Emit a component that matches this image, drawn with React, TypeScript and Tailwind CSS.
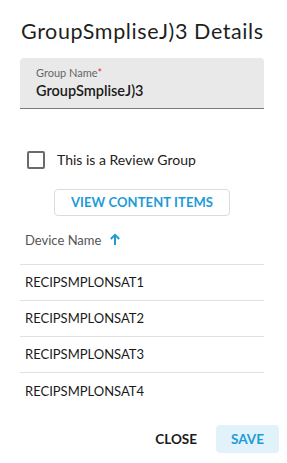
import React from "react";

const rows = ["RECIPSMPLONSAT1", "RECIPSMPLONSAT2", "RECIPSMPLONSAT3", "RECIPSMPLONSAT4"];

export default function App() {
  return (
    <div
      className="w-[287px] h-[463px] bg-white overflow-hidden flex flex-col pl-5 pr-[23px]"
      style={{ fontFamily: "Lato, 'Open Sans', sans-serif" }}
    >
      <h1 className="pt-[17px] text-[21.5px] leading-[28px] tracking-[0.6px] text-[#1f1f1f] pl-px whitespace-nowrap">
        GroupSmpliseJ)3 Details
      </h1>

      <div className="mt-[13px] h-[51px] bg-[#e9e9e9] rounded-t-[4px] border-b border-[#7a7a7a] px-4 pt-[8px] flex flex-col">
        <div className="text-[11px] leading-[14px] text-[#666]">
          Group Name<span className="text-[#e0392b]">*</span>
        </div>
        <div className="text-[14.5px] leading-[20px] text-[#1a1a1a] font-semibold mt-[1px]">GroupSmpliseJ)3</div>
      </div>

      <div className="mt-[42px] flex items-center pl-[7px]">
        <div className="w-[18px] h-[18px] border-2 border-[#6b6b6b] rounded-[2px]" />
        <span className="ml-[12px] text-[14px] leading-[18px] text-[#222]">This is a Review Group</span>
      </div>

      <div className="mt-[20px] pl-[34px]">
        <button className="w-[176px] h-[27px] border border-[#dcdcdc] rounded-[4px] text-[13px] font-bold text-[#1e9bd7] tracking-[0.1px]">
          VIEW CONTENT ITEMS
        </button>
      </div>

      <div className="mt-[15px] h-[34px] flex items-start pl-[5px] border-b border-[#e0e0e0]">
        <span className="text-[13px] leading-[18px] text-[#555]">Device Name</span>
        <svg className="ml-[8px] mt-[2px]" width="12" height="13" viewBox="0 0 12 13">
          <path d="M6 12V2M1.8 6L6 1.8L10.2 6" stroke="#1e9bd7" strokeWidth="2" fill="none" />
        </svg>
      </div>

      {rows.map((r, i) => (
        <div
          key={r}
          className={`h-[36px] flex items-center pl-[5px] text-[13px] text-[#1a1a1a] ${i < rows.length - 1 ? "border-b border-[#e0e0e0]" : ""}`}
        >
          {r}
        </div>
      ))}

      <div className="mt-[16px] flex items-center justify-end -mr-[15px]">
        <button className="text-[13.5px] font-bold text-[#1a1a1a] mr-[19px]">CLOSE</button>
        <button className="w-[63px] h-[28px] rounded-[4px] bg-[#e1f2fb] text-[13.5px] font-bold text-[#1e9bd7]">SAVE</button>
      </div>
    </div>
  );
}
